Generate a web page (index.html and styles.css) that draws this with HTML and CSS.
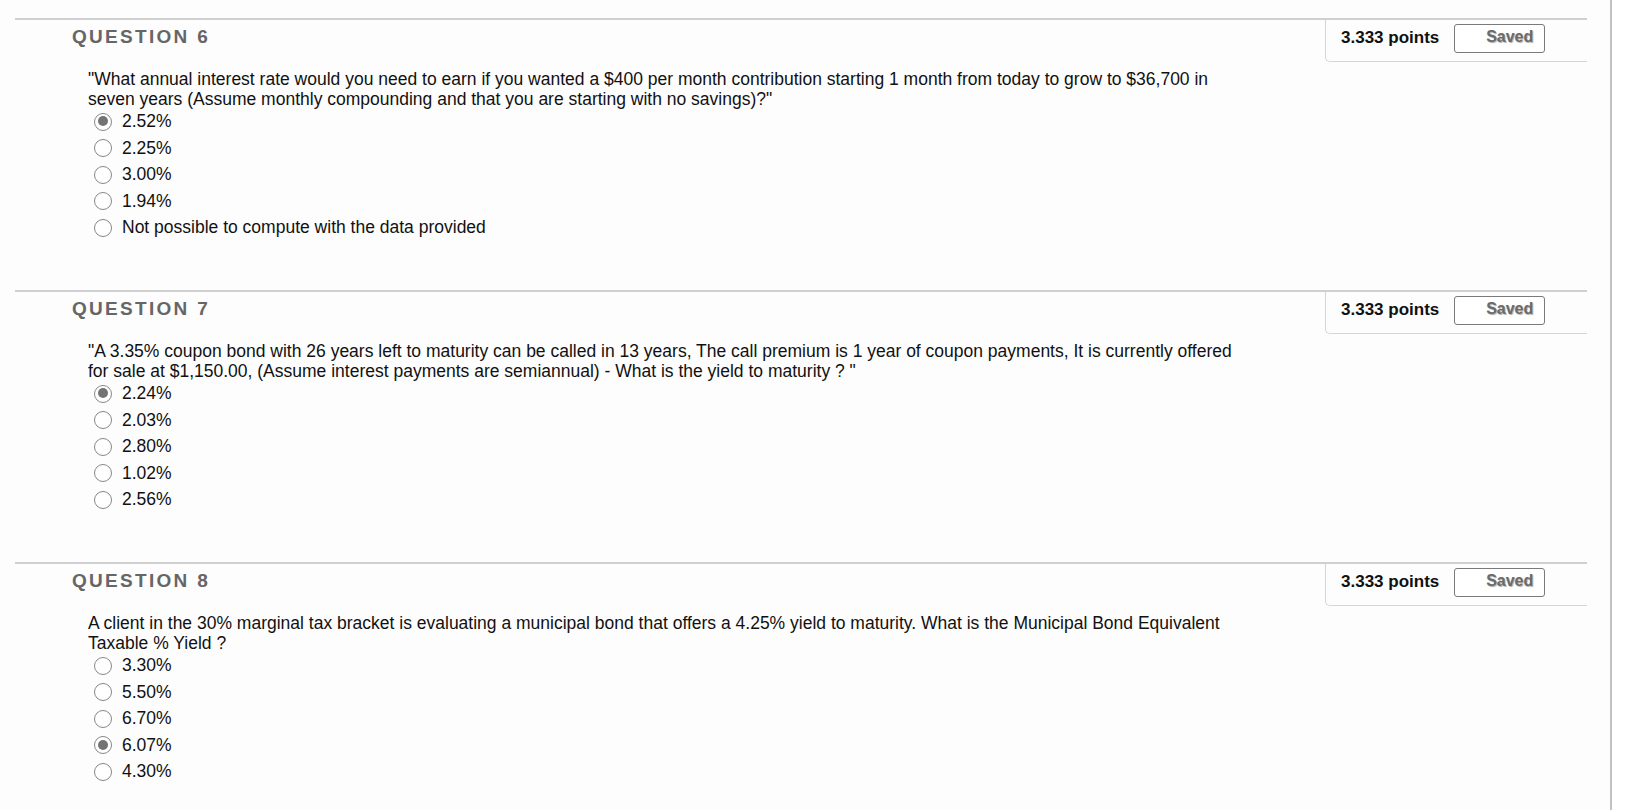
FILE: index.html
```html
<!DOCTYPE html>
<html>
<head>
<meta charset="utf-8">
<link rel="stylesheet" href="styles.css">
</head>
<body>
<div class="page">
  <div class="section">
    <div class="head">
      <h3 class="title">QUESTION 6</h3>
      <div class="panel">
        <span class="points">3.333 points</span>
        <span class="saved">Saved</span>
      </div>
    </div>
    <div class="qtext">"What annual interest rate would you need to earn if you wanted a $400 per month contribution starting 1 month from today to grow to $36,700 in seven years (Assume monthly compounding and that you are starting with no savings)?"</div>
    <ul class="opts">
      <li><span class="radio on"></span>2.52%</li>
      <li><span class="radio"></span>2.25%</li>
      <li><span class="radio"></span>3.00%</li>
      <li><span class="radio"></span>1.94%</li>
      <li><span class="radio"></span>Not possible to compute with the data provided</li>
    </ul>
  </div>
  <div class="section">
    <div class="head">
      <h3 class="title">QUESTION 7</h3>
      <div class="panel">
        <span class="points">3.333 points</span>
        <span class="saved">Saved</span>
      </div>
    </div>
    <div class="qtext">"A 3.35% coupon bond with 26 years left to maturity can be called in 13 years, The call premium is 1 year of coupon payments, It is currently offered for sale at $1,150.00, (Assume interest payments are semiannual) - What is the yield to maturity ? "</div>
    <ul class="opts">
      <li><span class="radio on"></span>2.24%</li>
      <li><span class="radio"></span>2.03%</li>
      <li><span class="radio"></span>2.80%</li>
      <li><span class="radio"></span>1.02%</li>
      <li><span class="radio"></span>2.56%</li>
    </ul>
  </div>
  <div class="section">
    <div class="head">
      <h3 class="title">QUESTION 8</h3>
      <div class="panel">
        <span class="points">3.333 points</span>
        <span class="saved">Saved</span>
      </div>
    </div>
    <div class="qtext">A client in the 30% marginal tax bracket is evaluating a municipal bond that offers a 4.25% yield to maturity. What is the Municipal Bond Equivalent Taxable % Yield ?</div>
    <ul class="opts">
      <li><span class="radio"></span>3.30%</li>
      <li><span class="radio"></span>5.50%</li>
      <li><span class="radio"></span>6.70%</li>
      <li><span class="radio on"></span>6.07%</li>
      <li><span class="radio"></span>4.30%</li>
    </ul>
  </div>
</div>
</body>
</html>
```

FILE: styles.css
```css
html, body {
  margin: 0;
  padding: 0;
  background: #fff;
}
body {
  font-family: "Liberation Sans", Arial, sans-serif;
  color: #111;
  overflow: hidden;
}
.page {
  width: 1610px;
  height: 810px;
  border-right: 2px solid #c2c2c2;
  padding-top: 18px;
  background: #fdfdfd;
}
.section {
  margin-left: 15px;
  width: 1572px;
  height: 270px;
  border-top: 2px solid #d0d0d0;
}
.head {
  display: flex;
  justify-content: space-between;
  align-items: flex-start;
}
.title {
  margin: 6px 0 0 57px;
  font-size: 19px;
  line-height: 22px;
  font-weight: bold;
  letter-spacing: 2.3px;
  color: #666;
}
.panel {
  width: 262px;
  height: 42px;
  box-sizing: border-box;
  border-left: 1px solid #d6d6d6;
  border-bottom: 1px solid #d6d6d6;
  border-bottom-left-radius: 5px;
  display: flex;
  align-items: flex-start;
  padding-top: 4px;
  padding-left: 15px;
  gap: 15px;
}
.points {
  font-size: 17px;
  font-weight: bold;
  line-height: 27px;
  color: #111;
}
.saved {
  width: 91px;
  height: 29px;
  box-sizing: border-box;
  border: 1px solid #7a7a7a;
  border-radius: 3px;
  text-align: right;
  padding-right: 11px;
  font-size: 16px;
  font-weight: bold;
  line-height: 23px;
  color: #6a6a6a;
  text-shadow: 1px 1px 1px #b0b0b0;
  background: #fff;
}
.qtext {
  margin: 7px 0 0 73px;
  max-width: 1155px;
  font-size: 17.5px;
  line-height: 20px;
}
.opts {
  list-style: none;
  margin: -1px 0 0 0;
  padding: 0 0 0 79px;
}
.opts li {
  display: flex;
  align-items: center;
  height: 26.5px;
  font-size: 17.5px;
  line-height: 26.5px;
}
.radio {
  width: 18px;
  height: 18px;
  box-sizing: border-box;
  border: 1.5px solid #888;
  border-radius: 50%;
  background: #fff;
  margin-right: 10px;
  margin-top: 1px;
  flex: none;
  position: relative;
}
.radio.on::after {
  content: "";
  position: absolute;
  left: 2.5px;
  top: 2.5px;
  width: 10px;
  height: 10px;
  border-radius: 50%;
  background: #737373;
}
```
